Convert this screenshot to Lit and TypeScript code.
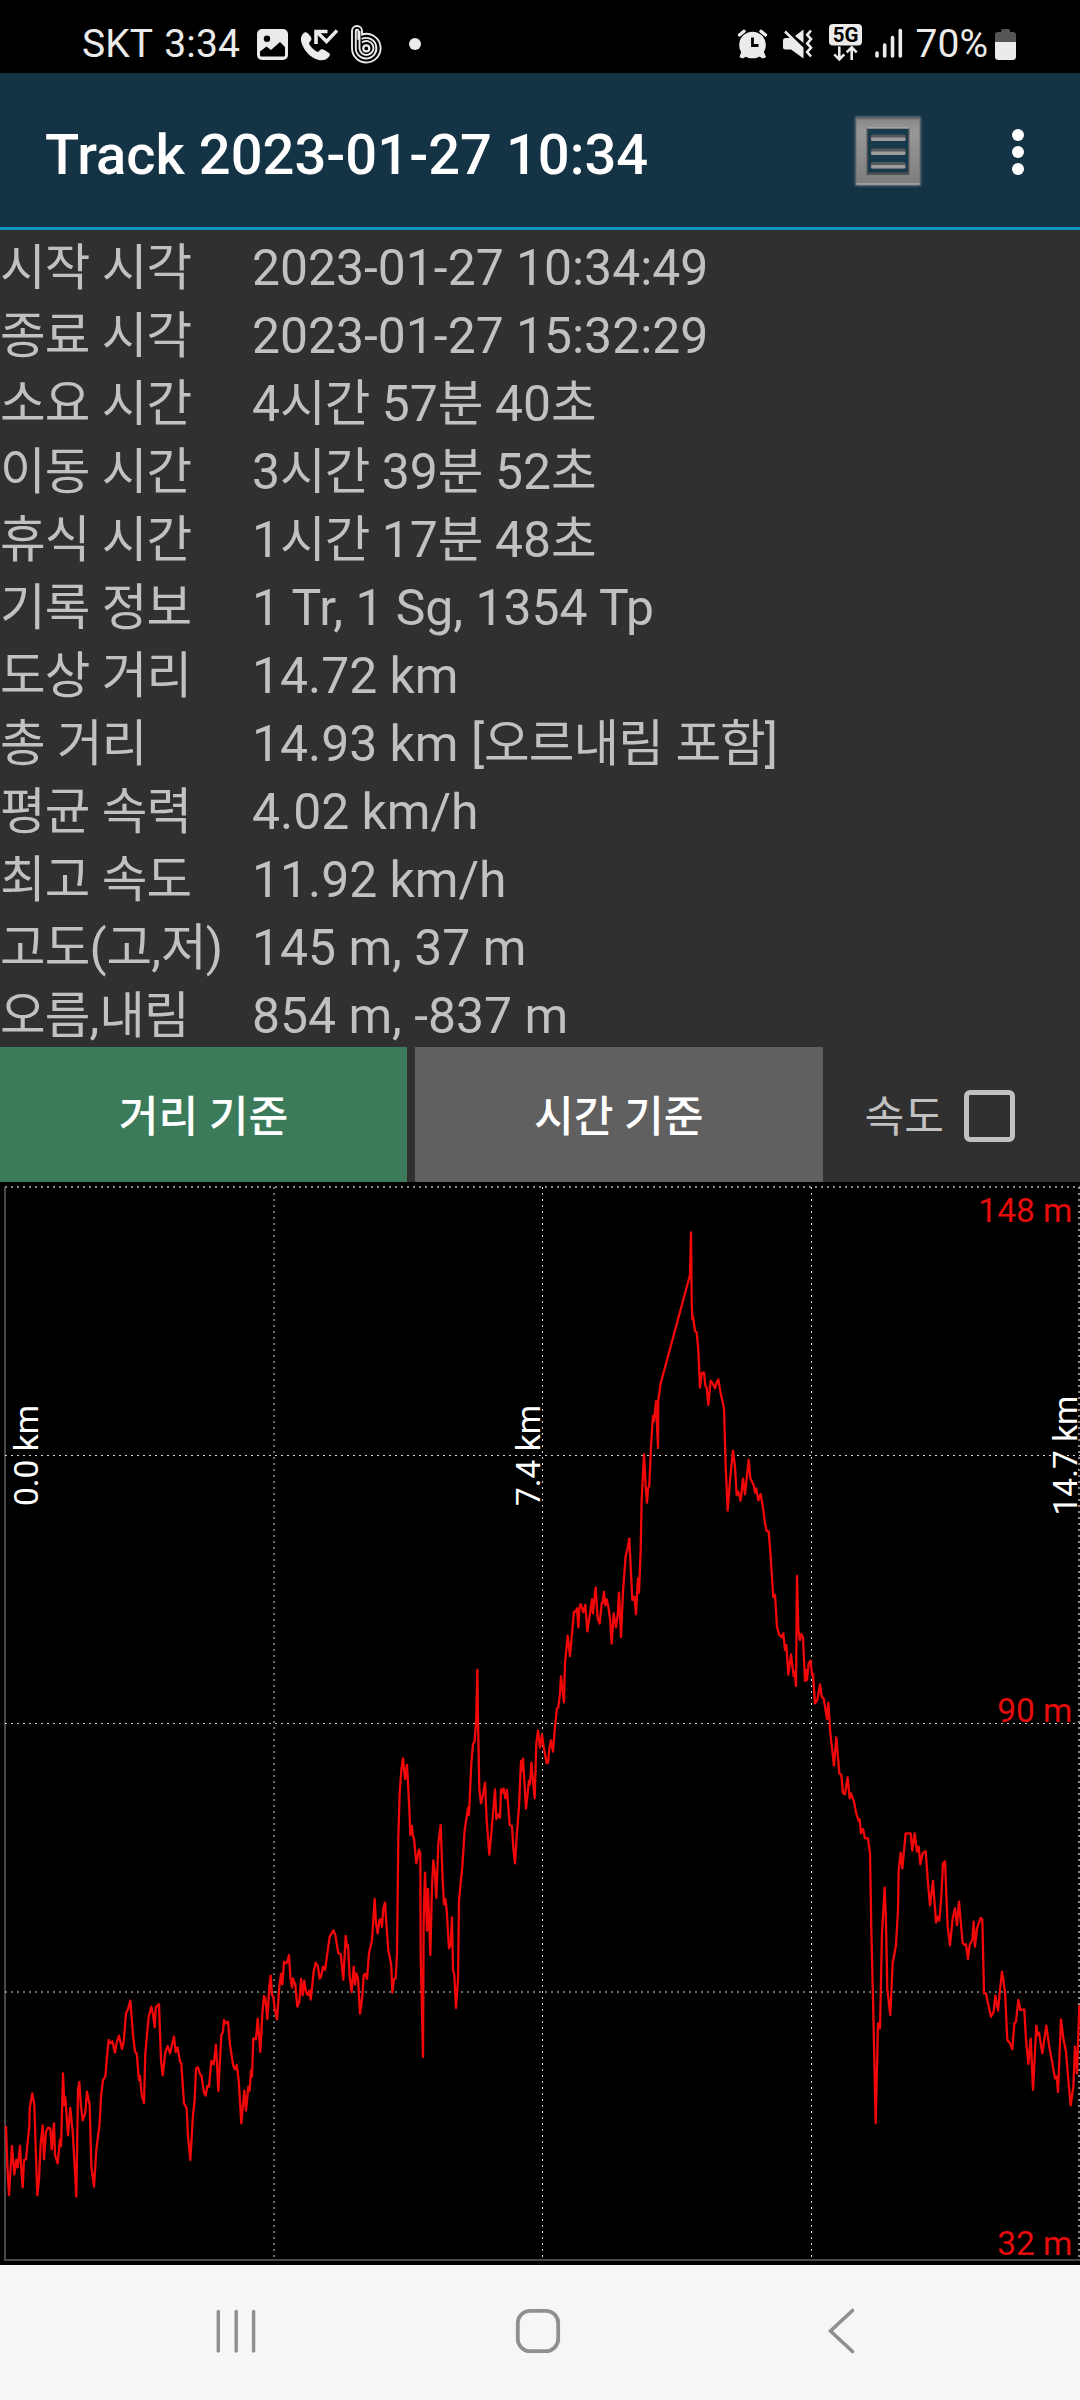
import { LitElement, html, css, svg } from "lit";
import { customElement } from "lit/decorators.js";

const ROWS: [string, string][] = [
  ["시작 시각", "2023-01-27 10:34:49"],
  ["종료 시각", "2023-01-27 15:32:29"],
  ["소요 시간", "4시간 57분 40초"],
  ["이동 시간", "3시간 39분 52초"],
  ["휴식 시간", "1시간 17분 48초"],
  ["기록 정보", "1 Tr, 1 Sg, 1354 Tp"],
  ["도상 거리", "14.72 km"],
  ["총 거리", "14.93 km [오르내림 포함]"],
  ["평균 속력", "4.02 km/h"],
  ["최고 속도", "11.92 km/h"],
  ["고도(고,저)", "145 m, 37 m"],
  ["오름,내림", "854 m, -837 m"],
];

// Hangul runs are set a little tighter than the Latin text around them.
const mixed = (text: string) =>
  text
    .split(/([가-힣]+)/)
    .filter((part) => part)
    .map((part) => (/[가-힣]/.test(part) ? html`<span class="ko">${part}</span>` : part));

// Elevation samples in thirds of a pixel, grouped by stretch of the track.
const TRACK: { x: number; y: number; pts: string }[] = [
  {
    x: 0,
    y: 798,
    pts: `18,438 22,560 27,645 36,498 43,583 49,540 53,562 60,497 64,570 68,622 72,540 78,538 84,475 88,440 89,385 97,340 103,375 107,500 112,646 117,600 122,490 128,436 132,538 138,455 144,443 151,446 155,508 162,430 165,525 173,550 180,478 183,498 186,400 189,280 193,375 196,352 204,466 211,384 218,455 221,505 229,650 234,330 238,306 243,380 248,421 256,398 261,335 269,375 274,560 282,620 289,510 299,430 303,350 309,300 316,290 322,220 326,180 330,190 337,184 345,218 350,188 357,167 366,207 371,185 378,100 384,88 391,62 399,165 405,215 410,220 417,300 420,288 425,345 432,369 436,220 446,110 454,80 459,103 464,142 467,82 477,72 483,240 488,286 496,218 503,198 510,220 522,170 527,216 533,202 540,245 544,250 552,370 560,385 564,470 571,540 579,405 584,360 588,265 594,262 600,283 604,285 612,338 617,347 622,318 627,320 634,243 641,253 648,194 655,333 664,165 669,155 672,120 678,130 684,125 690,195 700,258 705,268 710,255 716,300 724,430 733,332 738,392 745,320 749,332 753,272 756,290 760,175 768,178 773,116 781,216 787,100`,
  },
  {
    x: 250,
    y: 538,
    pts: `42,828 46,835 52,897 58,800 62,767 66,825 70,830 74,865 81,898 88,800 93,762 97,793 102,725 109,730 113,722 117,705 121,770 126,802 129,775 136,795 142,860 148,845 153,777 158,826 163,782 168,815 173,825 178,812 182,839 187,795 191,755 197,728 204,740 209,776 213,770 219,740 225,750 230,715 239,650 245,640 250,631 256,645 265,700 272,702 280,779 287,648 291,680 294,676 299,770 305,816 311,740 315,793 319,760 324,775 330,881 337,830 341,765 346,762 351,777 357,700 366,660 374,537 378,610 383,640 388,600 392,598 396,620 400,565 405,548 409,610 415,690 421,720 424,740 427,818 432,778 437,775 441,700 445,350 449,220 454,150 459,115 465,177 471,135 478,265 481,345 486,318 489,348 492,355 499,430 507,389 511,400 512,700 519,1011 521,600 525,458 531,632 534,507 541,705 546,500 550,421 555,460 559,534 565,370 572,315 578,480 582,553 586,537 590,570 597,685 602,675 606,592 609,750 613,765 618,864 624,780 627,540 637,440 644,330 651,285 654,263 657,285 664,130 669,72 674,65 679,-10 682,-150 684,0 688,210 693,250 699,225 705,188 710,300 718,404 725,330 735,208 739,297 745,283 750,293`,
  },
  {
    x: 500,
    y: 358,
    pts: `3,748 8,757 11,745 16,775 21,750 29,855 36,858 40,925 45,970 50,890 57,800 63,663 66,692 69,656 78,806 87,722 90,733 94,668 104,775 109,610 114,572 120,623 126,583 130,615 140,669 144,669 148,625 153,601 159,635 165,560 171,505 175,502 180,460 183,409 192,487 195,370 203,287 210,348 216,280 222,215 228,215 231,205 235,262 238,205 242,192 250,217 256,194 262,274 269,228 276,178 279,220 287,142 293,235 299,251 305,190 308,188 312,156 316,196 320,178 325,200 330,235 335,311 341,220 348,262 353,225 357,158 363,291 369,155 377,48 382,30 388,-5 392,80 397,180 403,170 408,223 414,115 417,158`,
  },
  {
    x: 640,
    y: 18,
    pts: `2,1050 5,900 12,763 17,860 21,908 24,867 28,855 33,740 39,648 42,663 48,603 54,744 55,600 62,550 150,225 153,97 155,300 157,358 159,350 165,393 170,397 175,450 180,563 185,520 192,517 196,557 200,562 205,615 212,542 218,550 225,565 230,547 235,538 242,580 252,625 257,800 263,932 270,840 279,752 285,800 290,885 295,875 302,902 309,836 315,883 326,780 331,835 341,855 345,878 348,865 355,901 362,882 370,930 375,970 380,993 386,994 392,1070 400,1192 405,1185 411,1280 417,1303 426,1312 430,1300 435,1350 439,1335 445,1424 453,1363 461,1428 464,1415 468,1458 471,1128 475,1290 480,1320 484,1302 489,1312 495,1443 498,1410 501,1440 506,1390 512,1382 516,1425 519,1422 525,1510 532,1500`,
  },
  {
    x: 820,
    y: 498,
    pts: `0,13 5,50 11,55 21,117 25,68 31,160 42,257 49,172 58,280 64,285 69,340 75,343 83,292 89,355 93,340 102,365 108,397 116,423 119,418 123,460 129,447 135,475 144,475 150,520 154,750 160,1000 167,1330 174,1030 180,1045 186,760 194,623 198,730 202,930 206,963 211,1005 218,850 228,795 234,690 236,570 242,518 247,565 257,460 272,460 277,512 284,460 291,515 296,500 301,553 308,520 317,514 324,610 330,676 339,603 348,728 353,710 358,722 364,650 369,550 375,544 383,740 390,796 398,715 405,685 411,735 417,665 428,790 435,795 438,793 444,837 449,795 457,780 461,725 465,800 471,745 482,714 487,718 492,940 498,940 504,970 513,1010 521,995 526,947 534,992 541,920 546,875 555,935 562,1080 570,1090 577,1108 583,1030 588,1025 595,960 601,990 613,988 618,1080 625,1152 632,1076 639,1230 649,1037 653,1065 657,1058 667,1120 679,1037 687,1095 697,1150 705,1195 710,1190 714,1236 723,1018 730,1075 738,1115 745,1200 752,1276 760,1220 765,1100 771,1180 778,975`,
  },
];

const trackPoints = TRACK.map((s) =>
  s.pts
    .split(" ")
    .map((p) => {
      const [px, py] = p.split(",").map(Number);
      return `${(s.x + px / 3).toFixed(2)},${(s.y + py / 3).toFixed(2)}`;
    })
    .join(" "),
).join(" ");

@customElement("status-bar")
class StatusBar extends LitElement {
  static styles = css`
    :host {
      display: flex;
      align-items: center;
      justify-content: space-between;
      height: 73px;
      box-sizing: border-box;
      padding: 0 62px 0 82px;
      background: #000;
      color: #ebebeb;
      font: 39px/60px Roboto, "Noto Sans CJK KR", sans-serif;
    }
    .side {
      display: flex;
      align-items: center;
      height: 60px;
      padding-top: 14px;
      white-space: pre;
    }
    .text { height: 60px; }
    .carrier { word-spacing: 2px; letter-spacing: 0.12px; }
    .notices { margin-left: 14px; }
    .percent { margin-left: 10px; }
    .battery { margin-left: 7px; }
    svg { display: block; flex: none; }
  `;
  render() {
    return html`
      <div class="side">
        <span class="text carrier">SKT 3:34</span>
        <svg class="notices" width="174" height="60" viewBox="254 14 174 60">
          <rect x="257" y="29" width="31" height="31" rx="5" fill="#ebebeb" />
          <circle cx="267" cy="38.700" r="3.200" fill="#000" />
          <path d="M260 51.500l6.500-5 4.500 3.500 9-8 5 5v8q0 1.500-1.500 1.500h-22q-1.500 0-1.500-1.500z" fill="#000" />
          <path d="M304.500 32.500c1.800-1 3.200.2 5.500 3.200 2 2.800 2 4-.3 6.300-1 1-.8 2 .6 3.800 1.500 2 3 3.500 5 5 1.800 1.300 2.800 1.400 3.900.1 1.500-1.800 3-2 5.200-.8l4.300 2.700c1.600 1.200 1.600 2.400.3 4-2.600 3.200-6.500 4.300-11 3C310.500 57.500 303.500 50.500 301.300 42c-1-4 .3-7.500 3.200-9.500z" fill="#ebebeb" />
          <path d="M337 30.500 326.500 41.500 317.500 32.500" fill="none" stroke="#ebebeb" stroke-width="3.400" />
          <path d="M316 44V31.500H327.500" fill="none" stroke="#ebebeb" stroke-width="3.600" />
          <g fill="none" stroke="#ebebeb" stroke-width="1.900">
            <path d="M352 48.500V31a5 5 0 0 1 10 0V34.500a14.300 14.300 0 1 1-10 14z" />
            <path d="M355.800 48.500V31a1.300 1.300 0 0 1 2.600 0V39.800M361.500 39a10.300 10.300 0 1 1-5.700 9.500" />
            <path d="M362 42.600a7 7 0 1 1-2.500 5.900V31" />
            <circle cx="366.300" cy="48.400" r="3" stroke-width="2.200" />
          </g>
          <circle cx="415" cy="44" r="6" fill="#ebebeb" />
        </svg>
      </div>
      <div class="side">
        <svg width="170" height="60" viewBox="736 14 170 60">
          <g fill="#ebebeb">
            <circle cx="752.500" cy="45" r="13.300" />
            <path d="M742 51l-2 6 3 1 6-4zM763 51l2.500 6-3 1-6-4z" stroke="#ebebeb" />
            <path d="M739.500 35 744 31.300M765.500 35 761 31.300" stroke="#ebebeb" stroke-width="3.400" stroke-linecap="round" />
            <path d="M752.500 37.500V45.500H758.500" fill="none" stroke="#000" stroke-width="2.800" />
            <path d="M785.500 38h6L803.500 49V58.500L791 49.500h-5.500q-2.500 0-2.500-2.500v-6.500q0-2.500 2.500-2.500zM795 36l8.500-6.500V43z" />
          </g>
          <path d="M785 31.500 803 49" fill="none" stroke="#ebebeb" stroke-width="2.600" />
          <path d="M811 30.500l-3.800 4.300 3.800 4.300-3.800 4.300 3.800 4.300-3.800 4.300 3.800 4.500" fill="none" stroke="#ebebeb" stroke-width="2.600" />
          <rect x="829" y="24" width="33" height="21.500" rx="4" fill="#ebebeb" />
          <text x="845.500" y="41.800" text-anchor="middle" font-family="Roboto, sans-serif" font-weight="700" font-size="20.500" fill="#000">5G</text>
          <path d="M839.300 46.500V59M834.300 54.300l5 5 5-5M851.700 60V48M846.700 52.300l5-5 5 5" fill="none" stroke="#ebebeb" stroke-width="2.600" />
          <path d="M877 53v3M884.700 45v11M892.500 37.500V56M900.300 30.500V56" fill="none" stroke="#ebebeb" stroke-width="3.600" stroke-linecap="round" />
        </svg>
        <span class="text percent">70%</span>
        <svg class="battery" width="23" height="60" viewBox="995 14 23 60">
          <path d="M995 42V35q0-3 3-3h3v-1q0-2 2-2h5q2 0 2 2v1h3q3 0 3 3v7z" fill="#555" />
          <path d="M995 42h21v14.500q0 3.500-3.500 3.500h-14q-3.500 0-3.500-3.500z" fill="#ebebeb" />
        </svg>
      </div>
    `;
  }
}

@customElement("title-bar")
class TitleBar extends LitElement {
  static styles = css`
    :host {
      display: flex;
      align-items: center;
      height: 157px;
      box-sizing: border-box;
      padding: 4px 54px 0 45px;
      background: #143344;
      border-bottom: 3px solid #0996be;
    }
    h1 {
      flex: 1;
      margin: 0;
      padding-top: 5px;
      color: #fff;
      font: 500 56.100px/66px Roboto, sans-serif;
    }
    svg { display: block; }
    .list { margin-right: 86px; }
  `;
  render() {
    return html`
      <h1>Track 2023-01-27 10:34</h1>
      <svg class="list" width="72" height="76" viewBox="852 114 72 76">
        <defs>
          <linearGradient id="metal" x1="0" y1="0" x2="0" y2="1">
            <stop offset="0" stop-color="#868686" />
            <stop offset=".2" stop-color="#989898" />
            <stop offset="1" stop-color="#7d7d7d" />
          </linearGradient>
          <filter id="glow" x="-20%" y="-20%" width="140%" height="140%"><feGaussianBlur stdDeviation="1" /></filter>
        </defs>
        <rect x="855" y="116.500" width="66" height="69.500" rx="1" fill="#68767e" filter="url(#glow)" />
        <rect x="856.500" y="118" width="63" height="66.500" fill="url(#metal)" />
        <path d="M856.500 118.500h63" stroke="#696969" stroke-width="1.500" />
        <path d="M856.500 184h63" stroke="#a9a9a9" stroke-width="1.500" />
        <rect x="866.500" y="127.500" width="43" height="47.500" fill="#4f5355" />
        <path d="M867 127.800h42" stroke="#b4b4b4" stroke-width="1.200" />
        <rect x="868" y="129" width="40" height="43.500" fill="#18394b" />
        ${[137.5, 151.5, 165].map(
          (y) => svg`
            <rect x="870.500" y=${y - 3} width="35.500" height="6.500" rx="3" fill="#54595c" />
            <rect x="871" y=${y} width="34.500" height="3.500" rx="1.500" fill="#9c9c9c" />`,
        )}
      </svg>
      <svg width="16" height="50" viewBox="1010 127 16 50" fill="#fff">
        <circle cx="1018" cy="135" r="6" /><circle cx="1018" cy="152" r="6" /><circle cx="1018" cy="169" r="6" />
      </svg>
    `;
  }
}

@customElement("track-stats")
class TrackStats extends LitElement {
  static styles = css`
    :host {
      display: grid;
      grid-template-columns: 252px 1fr;
      grid-auto-rows: 68px;
      height: 817px;
      box-sizing: border-box;
      padding-top: 4px;
      color: #c1c1c1;
      font: 49.850px/68px Roboto, "Noto Sans CJK KR", sans-serif;
      white-space: pre;
    }
    div { height: 68px; }
    .ko { font-family: "Noto Sans CJK KR", sans-serif; font-size: 49.600px; letter-spacing: -0.900px; line-height: 1px; }
  `;
  render() {
    return ROWS.map(([k, v]) => html`<div>${mixed(k)}</div><div>${mixed(v)}</div>`);
  }
}

@customElement("mode-bar")
class ModeBar extends LitElement {
  static styles = css`
    :host {
      display: flex;
      height: 135px;
      gap: 8px;
      font: 500 43.200px/141px Roboto, "Noto Sans CJK KR", sans-serif;
      color: #fff;
    }
    .mode {
      width: 407.500px;
      height: 135px;
      text-align: center;
      background: #606060;
    }
    .mode.on { width: 407px; background: #3b7b5a; }
    .speed {
      display: flex;
      align-items: flex-start;
      margin-left: 34px;
      color: #c1c1c1;
      font-weight: 400;
    }
    .box {
      width: 51px;
      height: 52px;
      margin: 43px 0 0 20.500px;
      box-sizing: border-box;
      border: 5px solid #c1c1c1;
      border-radius: 6px;
    }
  `;
  render() {
    return html`
      <div class="mode on">거리 기준</div>
      <div class="mode">시간 기준</div>
      <div class="speed">속도<span class="box"></span></div>
    `;
  }
}

@customElement("elevation-chart")
class ElevationChart extends LitElement {
  static styles = css`
    :host { display: block; height: 1083px; background: #000; }
    svg { display: block; }
    text { font: 33.500px Roboto, sans-serif; }
    .grid { stroke: #d8d8d8; stroke-width: 1; stroke-dasharray: 2 4; }
    .edge { stroke: #888; stroke-width: 2; stroke-dasharray: 2 4; }
    .frame { fill: none; stroke: #484848; stroke-width: 2; }
    .line { fill: none; stroke: #f20808; stroke-width: 2.300; stroke-linejoin: round; }
    .alt { fill: #e60c0c; text-anchor: end; }
    .dist { fill: #fff; text-anchor: middle; }
  `;
  render() {
    return html`
      <svg width="1080" height="1083" viewBox="0 0 1080 1083">
        <path class="frame" d="M5 5V1078H1080" />
        <path class="grid" d="M5 273.500H1080M5 541.500H1080M5 810H1080M274 5V1078M542.500 5V1078M811.500 5V1078" />
        <path class="edge" d="M5 5H1080M1079 5V1078" />
        <polyline class="line" points=${trackPoints} />
        <text class="alt" x="1072.500" y="40">148 m</text>
        <text class="alt" x="1072.500" y="539.500">90 m</text>
        <text class="alt" x="1072.500" y="1073">32 m</text>
        <text class="dist" transform="translate(38 273.500) rotate(-90)">0.0 km</text>
        <text class="dist" transform="translate(540 273.500) rotate(-90)">7.4 km</text>
        <text class="dist" transform="translate(1076.500 273.500) rotate(-90)">14.7 km</text>
      </svg>
    `;
  }
}

@customElement("nav-bar")
class NavBar extends LitElement {
  static styles = css`
    :host {
      display: flex;
      align-items: center;
      height: 135px;
      box-sizing: border-box;
      padding: 0 0 3px 214px;
      background: #f6f6f6;
    }
    svg { display: block; fill: none; stroke: #8f8f8f; stroke-width: 3.400; stroke-linecap: round; }
    .home { margin: 0 264px 0 256px; }
  `;
  render() {
    return html`
      <svg width="44" height="48" viewBox="214 2307 44 48"><path d="M218.300 2311.500v39.500M236.200 2311.500v39.500M253.600 2311.500v39.500" /></svg>
      <svg class="home" width="48" height="48" viewBox="514 2307 48 48"><rect x="517.800" y="2310.800" width="40.400" height="40.400" rx="12.500" stroke-width="3.800" /></svg>
      <svg width="30" height="48" viewBox="826 2307 30 48"><path d="M852.500 2310.500 830.500 2331l22 20.500" stroke-width="3.600" /></svg>
    `;
  }
}

@customElement("app-root")
class AppRoot extends LitElement {
  static styles = css`
    :host {
      display: flex;
      flex-direction: column;
      width: 1080px;
      height: 2400px;
      overflow: hidden;
      background: #303030;
    }
  `;
  render() {
    return html`
      <status-bar></status-bar>
      <title-bar></title-bar>
      <track-stats></track-stats>
      <mode-bar></mode-bar>
      <elevation-chart></elevation-chart>
      <nav-bar></nav-bar>
    `;
  }
}
